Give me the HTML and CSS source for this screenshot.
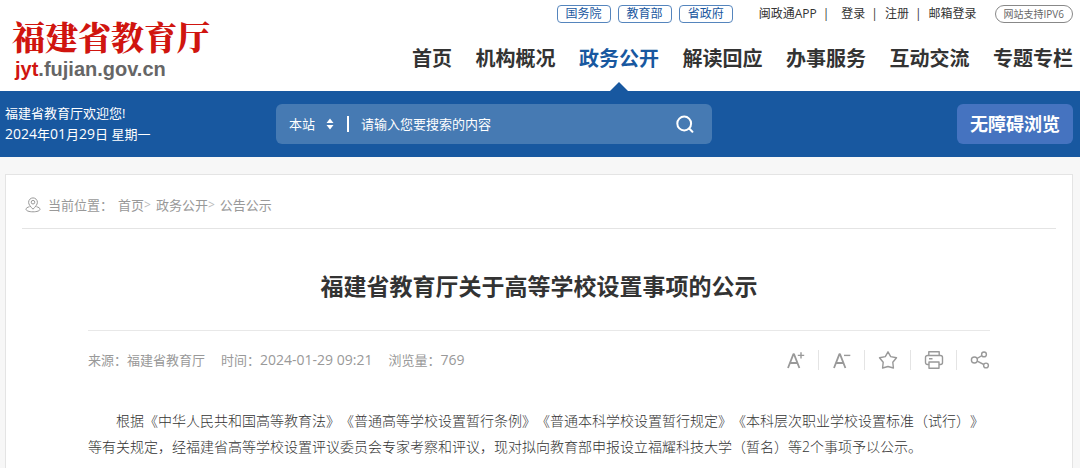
FILE: index.html
```html
<!DOCTYPE html>
<html lang="zh-CN">
<head>
<meta charset="utf-8">
<meta name="viewport" content="width=device-width, initial-scale=1">
<title>福建省教育厅关于高等学校设置事项的公示</title>
<link rel="stylesheet" href="styles.css">
</head>
<body>
<header class="header">
  <a class="logo" href="#">
    <span class="logo-name">福建省教育厅</span>
    <span class="logo-domain"><span class="logo-accent">jyt</span>.fujian.gov.cn</span>
  </a>
  <div class="header-right">
    <div class="topbar">
      <div class="gov-links">
        <a class="gov-link" href="#">国务院</a>
        <a class="gov-link" href="#">教育部</a>
        <a class="gov-link" href="#">省政府</a>
      </div>
      <div class="user-links">
        <a class="app-link" href="#">闽政通APP</a>
        <a href="#">登录</a>
        <a href="#">注册</a>
        <a href="#">邮箱登录</a>
      </div>
      <a class="ipv6" href="#">网站支持IPV6</a>
    </div>
    <nav class="nav">
      <a href="#">首页</a>
      <a href="#">机构概况</a>
      <a class="active" href="#">政务公开</a>
      <a href="#">解读回应</a>
      <a href="#">办事服务</a>
      <a href="#">互动交流</a>
      <a href="#">专题专栏</a>
    </nav>
  </div>
</header>

<section class="banner">
  <div class="welcome">
    <div>福建省教育厅欢迎您!</div>
    <div><span class="number">2024</span>年<span class="number">01</span>月<span class="number">29</span>日 星期一</div>
  </div>
  <form class="search">
    <div class="scope">
      <select class="scope-select" aria-label="搜索范围"><option>本站</option></select>
      <svg class="scope-arrows" viewBox="0 0 8 12" aria-hidden="true"><path d="M4 0.5 7.5 5h-7zM4 11.5 0.5 7h7z"/></svg>
    </div>
    <input class="search-input" type="text" placeholder="请输入您要搜索的内容" aria-label="搜索内容">
    <button class="search-button" type="submit" aria-label="搜索">
      <svg viewBox="0 0 18 18" aria-hidden="true"><circle cx="8.2" cy="8.5" r="6.9"/><path d="m13.2 13.5 3.2 3.2"/></svg>
    </button>
  </form>
  <button class="accessible" type="button">无障碍浏览</button>
</section>

<main class="panel">
  <nav class="crumbs" aria-label="当前位置">
    <svg class="pin" viewBox="0 0 16 16" aria-hidden="true"><path d="M8 12.2C5.6 9.7 3.6 7.6 3.6 5.3a4.4 4.4 0 0 1 8.8 0c0 2.3-2 4.4-4.4 6.9z"/><circle cx="8" cy="5.2" r="1.8"/><path d="M4.6 9.7C2.4 10.2 1 11.1 1 12.2c0 1.6 3 2.6 7 2.6s7-1 7-2.6c0-1.1-1.4-2-3.6-2.5"/></svg>
    <span class="crumbs-label">当前位置：</span>
    <a href="#">首页</a><span class="arrow">&gt;</span>
    <a href="#">政务公开</a><span class="arrow">&gt;</span>
    <a href="#">公告公示</a>
  </nav>
  <article class="article">
    <h1 class="title">福建省教育厅关于高等学校设置事项的公示</h1>
    <div class="meta">
      <div class="facts">
        <span>来源：福建省教育厅</span>
        <span>时间：<span class="number">2024-01-29 09:21</span></span>
        <span>浏览量：<span class="number">769</span></span>
      </div>
      <div class="tools">
        <button type="button" aria-label="放大字体"><svg viewBox="0 0 20 20" aria-hidden="true"><path class="letter" d="M2 18 7.4 4.2h.6L13.4 18M4.2 13h7"/><path d="M11.8 5.4h6.4M15 2.2v6.4"/></svg></button>
        <button type="button" aria-label="缩小字体"><svg viewBox="0 0 20 20" aria-hidden="true"><path class="letter" d="M2 18 7.4 4.2h.6L13.4 18M4.2 13h7"/><path d="M12 5.4h6.3"/></svg></button>
        <button type="button" aria-label="收藏"><svg viewBox="0 0 20 20" aria-hidden="true"><path d="m10 1.8 2.7 4.8 5.8 1.1-3.7 4.6.6 5.7-5.4-1.5L4.6 18l.6-5.7-3.7-4.6 5.8-1.1z"/></svg></button>
        <button type="button" aria-label="打印"><svg viewBox="0 0 20 20" aria-hidden="true"><path d="M4.8 5.5V1.8h10.4v3.7M5 14.5H3.5a2 2 0 0 1-2-2v-5a2 2 0 0 1 2-2h13a2 2 0 0 1 2 2v5a2 2 0 0 1-2 2H15M5 12h10v6.2H5zM5 8.7h3.5"/></svg></button>
        <button type="button" aria-label="分享"><svg viewBox="0 0 20 20" aria-hidden="true"><circle cx="4.4" cy="10" r="3"/><circle cx="14" cy="4.4" r="2.4"/><circle cx="16" cy="15.5" r="2.4"/><path d="m7 8.5 4.9-2.9M7.2 11.2l6.6 3.3"/></svg></button>
      </div>
    </div>
    <p class="text">根据《中华人民共和国高等教育法》《普通高等学校设置暂行条例》《普通本科学校设置暂行规定》《本科层次职业学校设置标准（试行）》等有关规定，经福建省高等学校设置评议委员会专家考察和评议，现对拟向教育部申报设立福耀科技大学（暂名）等2个事项予以公示。</p>
  </article>
</main>
</body>
</html>
```

FILE: styles.css
```css
* { box-sizing: border-box; }

body {
  margin: 0;
  min-height: 100vh;
  display: flex;
  flex-direction: column;
  background: #f7f7f7;
  color: #333;
  font: 13px/20px "Open Sans", "Noto Sans CJK SC", sans-serif;
  text-spacing-trim: space-all;
}

a { color: inherit; text-decoration: none; }
button, input, select { font: inherit; color: inherit; background: none; border: 0; padding: 0; margin: 0; }
button { cursor: pointer; }
svg { display: block; fill: none; stroke: currentColor; }

/* Header */
.header {
  display: flex;
  justify-content: space-between;
  min-height: 91px;
  padding: 5px 7px 0 12px;
  background: #fff;
}
.logo { padding-top: 11px; white-space: nowrap; }
.logo-name {
  display: block;
  color: #d0150f;
  font: 900 33px/40px "Noto Serif CJK SC", "Noto Sans CJK SC", serif;
}
.logo-domain {
  display: block;
  padding-left: 3px;
  color: #666;
  font: bold 20px/26px "Liberation Sans", Arial, sans-serif;
}
.logo-accent { color: #d0150f; }

.header-right { flex: 0 1 661px; display: flex; flex-direction: column; }
.topbar {
  display: flex;
  justify-content: flex-end;
  align-items: center;
  font-size: 12px;
  line-height: 16px;
  white-space: nowrap;
}
.gov-links { display: flex; gap: 7px; margin-right: 26px; }
.gov-link {
  padding: 0 8px;
  border: 1px solid #5585bd;
  border-radius: 4px;
  color: #1a58a0;
}
.user-links { display: flex; margin-right: 18px; }
.user-links a:not(:last-child)::after { content: "|"; margin: 0 7px 0 6px; }
.user-links .app-link:not(:last-child)::after { margin-right: 12px; }
.ipv6 {
  padding: 0 8px;
  border: 1px solid #888;
  border-radius: 9px;
  color: #666;
  font-size: 10px;
}

.nav {
  display: flex;
  flex: 1;
  justify-content: space-between;
  padding-top: 21px;
  font-size: 20px;
  font-weight: bold;
  line-height: 30px;
  white-space: nowrap;
}
.nav .active { position: relative; color: #1858a0; }
.nav .active::after {
  content: "";
  position: absolute;
  bottom: 0;
  left: 50%;
  margin-left: -9px;
  border: 9px solid transparent;
  border-top: 0;
  border-bottom-color: #1858a0;
}

/* Blue banner with search */
.banner {
  display: flex;
  align-items: center;
  padding: 12px 7px 12px 5px;
  background: #1858a0;
  color: #fff;
}
.welcome { flex: 0 0 271px; line-height: 21px; }
.search {
  flex: 0 1 436px;
  display: flex;
  align-items: center;
  height: 40px;
  padding: 0 18px 0 13px;
  border-radius: 6px;
  background: #467ab3;
}
.scope {
  display: flex;
  align-items: center;
  padding-right: 13px;
  border-right: 2px solid #fff;
  height: 16px;
}
.scope-select { appearance: none; width: 37px; }
.scope-select option { color: #333; }
.scope-arrows { width: 8px; height: 12px; fill: #fff; stroke: none; }
.search-input { flex: 1; min-width: 0; padding-left: 12px; outline: 0; }
.search-input::placeholder { color: #fff; opacity: 1; }
.search-button svg { width: 18px; height: 18px; stroke-width: 2; stroke-linecap: round; }
.accessible {
  margin-left: auto;
  height: 40px;
  padding: 0 13px;
  border-radius: 6px;
  background: #4573c0;
  font-size: 18px;
  font-weight: bold;
}

/* Content panel */
.panel {
  flex: 1;
  margin: 17px 7px 0 5px;
  padding: 0 16px;
  border: 1px solid #e4e4e4;
  border-bottom: 0;
  background: #fff;
}
.crumbs {
  display: flex;
  align-items: center;
  padding: 20px 3px 13px;
  border-bottom: 1px solid #e4e4e4;
  color: #999;
}
.pin { width: 16px; height: 16px; margin-right: 7px; }
.crumbs-label { margin-right: 5px; }
.arrow { margin-right: 5px; font-size: 12px; color: #bbb; }

.article { padding: 0 66px 24px; }
.title {
  margin: 0;
  padding: 39px 0 26px;
  border-bottom: 1px solid #e8e8e8;
  font-size: 23px;
  line-height: 36px;
  text-align: center;
}
.meta {
  display: flex;
  justify-content: space-between;
  align-items: center;
  height: 58px;
  color: #999;
}
.facts { display: flex; gap: 16px; }
.number { font-size: 14px; line-height: 20px; }
.tools { display: flex; }
.tools button { padding-left: 13px; }
.tools button:not(:last-child) { padding-right: 12px; border-right: 1px solid #e4e4e4; }
.tools svg { width: 20px; height: 20px; stroke-width: 1.4; stroke-linejoin: round; }
.tools .letter { stroke-width: 1.8; }

.text {
  margin: 19px 0 0;
  text-indent: 2em;
  font-size: 14px;
  font-weight: 300;
  line-height: 26px;
}
```
